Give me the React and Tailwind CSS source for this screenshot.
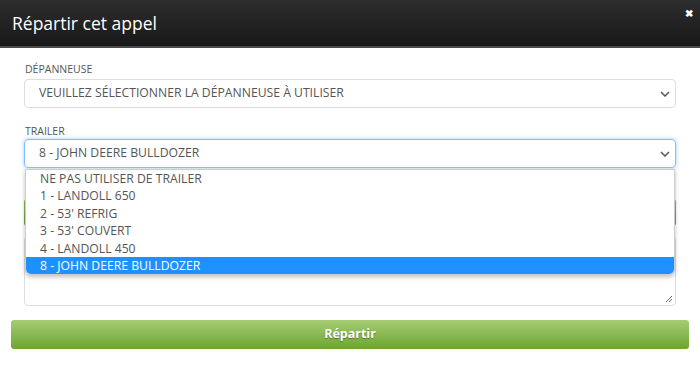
import React from "react";

const options = [
  "NE PAS UTILISER DE TRAILER",
  "1 - LANDOLL 650",
  "2 - 53' REFRIG",
  "3 - 53' COUVERT",
  "4 - LANDOLL 450",
  "8 - JOHN DEERE BULLDOZER",
];

function Chevron() {
  return (
    <svg width="10" height="6" viewBox="0 0 10 6" className="absolute right-[5px] top-1/2 -translate-y-1/2">
      <path d="M1 1 L5 5 L9 1" fill="none" stroke="#555" strokeWidth="1.5" />
    </svg>
  );
}

export default function App() {
  return (
    <div className="w-[700px] h-[370px] bg-white overflow-hidden" style={{ fontFamily: '"Open Sans", "Noto Sans", sans-serif' }}>
      <div className="h-[48px] bg-gradient-to-b from-[#2e2e2e] to-[#181818] border-b-2 border-[#4a4a4a] flex items-start justify-between pl-[12px] pr-[7px]">
        <div className="text-white text-[17.5px] leading-[24px] mt-[11px]">Répartir cet appel</div>
        <div className="text-white text-[10px] font-bold leading-none mt-[8px]">✖</div>
      </div>
      <div className="px-[24px] pt-[14px]">
        <div className="text-[10.5px] leading-[15px] text-[#555] pl-[1px]">DÉPANNEUSE</div>
        <div className="relative mt-[2px] h-[29px] border border-[#ddd] rounded-[4px] flex items-center pl-[14px] text-[12.2px] text-[#555]">
          VEUILLEZ SÉLECTIONNER LA DÉPANNEUSE À UTILISER
          <Chevron />
        </div>
        <div className="text-[10.5px] leading-[15px] text-[#555] pl-[1px] mt-[16px]">TRAILER</div>
        <div className="relative">
          <div className="relative h-[29px] border border-[#80bdff] rounded-[4px] flex items-center pl-[14px] text-[12.2px] text-[#555] shadow-[0_0_4px_rgba(102,175,233,0.6)]">
            8 - JOHN DEERE BULLDOZER
            <Chevron />
          </div>
          <div className="absolute left-[1px] right-[1px] top-[30px] z-10 bg-white border border-[#ccc] rounded-b-[6px] shadow-[0_2px_4px_rgba(0,0,0,0.25)] overflow-hidden">
            {options.map((o, i) => (
              <div
                key={o}
                className={
                  i === options.length - 1
                    ? "h-[17.4px] leading-[17px] pl-[14px] text-[12.2px] bg-[#1e90ff] text-white"
                    : "h-[17.4px] leading-[17px] pl-[14px] text-[12.2px] text-[#555]"
                }
              >
                {o}
              </div>
            ))}
          </div>
        </div>
        <div className="mt-[31px] h-[27px] rounded-[3px] bg-gradient-to-b from-[#8fbf5a] to-[#6f9c3a]"></div>
        <div className="relative mt-[10px] h-[70px] border border-[#ddd] rounded-[4px]">
          <svg width="8" height="8" viewBox="0 0 8 8" className="absolute right-[2px] bottom-[2px]">
            <path d="M7 1 L1 7 M7 4 L4 7" stroke="#666" strokeWidth="1" />
          </svg>
        </div>
      </div>
      <div className="px-[11px] mt-[14px]">
        <div className="h-[29px] rounded-[3px] bg-gradient-to-b from-[#a6cc73] to-[#6da52c] flex items-center justify-center text-white text-[12.5px] font-bold [text-shadow:0_1px_1px_rgba(0,0,0,0.35)]">
          Répartir
        </div>
      </div>
    </div>
  );
}
